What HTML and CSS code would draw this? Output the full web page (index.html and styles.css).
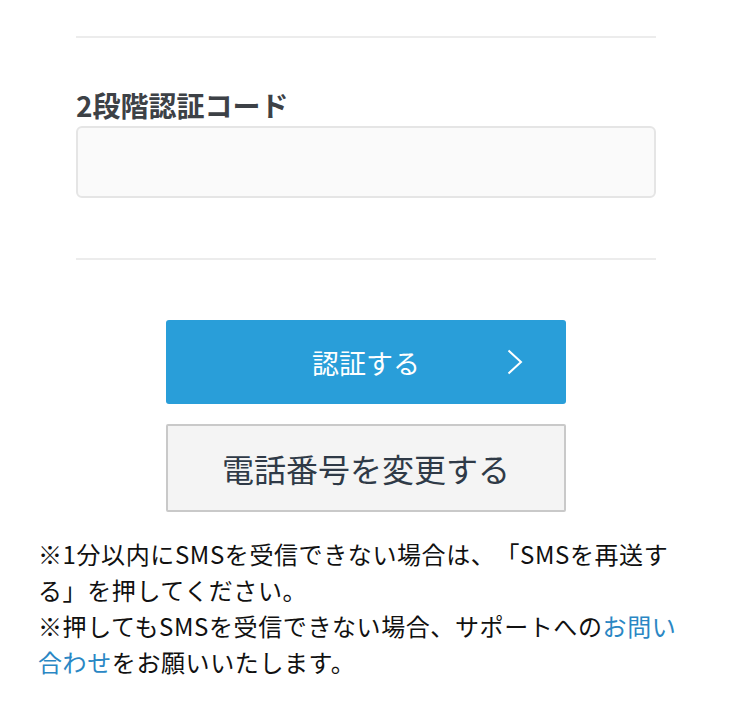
FILE: index.html
```html
<!DOCTYPE html>
<html lang="ja">
<head>
    <meta charset="UTF-8">
    <meta name="viewport" content="width=device-width, initial-scale=1.0">
    <title>2段階認証</title>
    <link rel="stylesheet" href="styles.css">
</head>
<body>
    <div class="page">
        <div class="form-area">
            <div class="field">
                <label class="field-label" for="code">2段階認証コード</label>
                <input class="field-input" id="code" type="text">
            </div>
        </div>

        <div class="actions">
            <button class="btn btn-primary" type="button">
                <span>認証する</span>
                <svg class="chevron" width="16" height="26" viewBox="0 0 16 26">
                    <path d="M1.5 1.5 L14 13 L1.5 24.5" fill="none" stroke="#fff" stroke-width="2"/>
                </svg>
            </button>
            <button class="btn btn-secondary" type="button">電話番号を変更する</button>
        </div>

        <div class="notes">
            <p>※1分以内にSMSを受信できない場合は、「SMSを再送する」を押してください。</p>
            <p>※押してもSMSを受信できない場合、サポートへの<a href="#">お問い合わせ</a>をお願いいたします。</p>
        </div>
    </div>
</body>
</html>
```

FILE: styles.css
```css
body {
    margin: 0;
    background-color: #fff;
    font-family: "Noto Sans CJK JP", "Noto Sans", sans-serif;
    color: #111;
}
.page {
    padding: 0 38px;
}
.form-area {
    margin: 0 38px;
    padding-top: 36px;
}
.field {
    border-top: 2px solid #ececec;
    border-bottom: 2px solid #ececec;
    padding: 46px 0 60px;
}
.field-label {
    display: block;
    font-size: 28px;
    font-weight: bold;
    line-height: 42px;
    color: #3d4146;
}
.field-input {
    display: block;
    box-sizing: border-box;
    width: 100%;
    height: 72px;
    margin: 0;
    border: 2px solid #e5e5e5;
    border-radius: 6px;
    background-color: #fafafa;
}
.actions {
    display: flex;
    flex-direction: column;
    align-items: center;
    gap: 20px;
    padding-top: 60px;
}
.btn {
    box-sizing: border-box;
    width: 400px;
    margin: 0;
    font-family: inherit;
    cursor: pointer;
}
.btn-primary {
    position: relative;
    display: flex;
    align-items: center;
    justify-content: center;
    height: 84px;
    border: none;
    border-radius: 3px;
    background-color: #299ed9;
    color: #fff;
    font-size: 27px;
}
.chevron {
    position: absolute;
    right: 43px;
    top: 29px;
}
.btn-secondary {
    height: 88px;
    border: 2px solid #c9c9c9;
    border-radius: 2px;
    background-color: #f4f4f4;
    color: #2f3a47;
    font-size: 32px;
}
.notes {
    padding-top: 24px;
    font-size: 24px;
    line-height: 36px;
    letter-spacing: 0.6px;
    text-spacing-trim: space-all;
}
.notes p {
    margin: 0;
}
.notes a {
    color: #2a87c4;
    text-decoration: none;
}
```
